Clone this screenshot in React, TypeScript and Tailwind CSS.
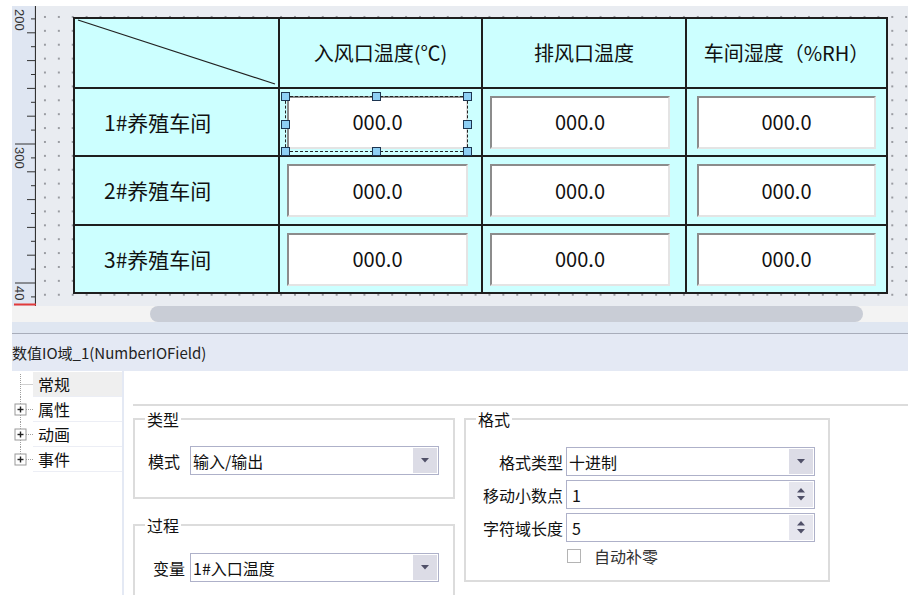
import React from 'react';

const rows = ['1#养殖车间', '2#养殖车间', '3#养殖车间'];

// ruler ticks, one every 13.9px, major every 10th
function Ruler() {
    const ticks = Array.from({ length: 22 }, (_, k) => k);
    return (
        <div className="w-[24px] h-full shrink-0 bg-[#dfe6f2] relative">
            <svg width="24" height="300" className="block">
                <line x1="23.5" y1="0" x2="23.5" y2="300" stroke="#333" strokeWidth="1.2" />
                {ticks.map(k => {
                    const y = -1 + 13.9 * k;
                    const len = k % 10 === 0 ? 21 : k % 2 === 0 ? 9 : 5;
                    return <line key={k} x1={24 - len} y1={y} x2="24" y2={y} stroke="#333" strokeWidth="1" />;
                })}
                <text transform="translate(3,3) rotate(90)" fontSize="13" fill="#333" fontFamily="'Liberation Sans', sans-serif">200</text>
                <text transform="translate(3,141) rotate(90)" fontSize="13" fill="#333" fontFamily="'Liberation Sans', sans-serif">300</text>
                <text transform="translate(3,280) rotate(90)" fontSize="13" fill="#333" fontFamily="'Liberation Sans', sans-serif">40</text>
                <line x1="2" y1="298.5" x2="24" y2="298.5" stroke="#e23a3a" strokeWidth="2" />
            </svg>
        </div>
    );
}

function ValueBox({ className }: { className: string }) {
    return (
        <div className={`h-[53px] bg-white border-2 border-t-[#8c8c8c] border-l-[#8c8c8c] border-b-[#e4e4e4] border-r-[#e4e4e4] flex items-center justify-center text-[20px] text-[#111] ${className}`}>
            000.0
        </div>
    );
}

function Handle({ className }: { className: string }) {
    return <div className={`absolute w-[9px] h-[9px] bg-[#8ecff4] border border-[#1d3550] ${className}`} />;
}

function DropArrow() {
    return (
        <svg width="8" height="5" viewBox="0 0 8 5">
            <path d="M0 0 L8 0 L4 4.5 Z" fill="#505068" />
        </svg>
    );
}

function Select({ value }: { value: string }) {
    return (
        <div className="w-[249px] h-[29px] shrink-0 border border-[#aeb1c9] bg-white flex">
            <div className="flex-1 pl-[2px] flex items-center text-[16px] text-[#111]">{value}</div>
            <div className="w-[24px] m-[1px] bg-[#dcdce6] flex items-center justify-center">
                <DropArrow />
            </div>
        </div>
    );
}

function Spinner({ value }: { value: string }) {
    return (
        <div className="w-[249px] h-[29px] shrink-0 border border-[#aeb1c9] bg-white flex">
            <div className="flex-1 pl-[5px] flex items-center text-[16px] text-[#111]">{value}</div>
            <div className="w-[24px] m-[1px] bg-[#e6e6ee] flex flex-col items-center justify-center gap-[3px]">
                <svg width="8" height="5" viewBox="0 0 8 5"><path d="M0 4.5 L8 4.5 L4 0 Z" fill="#505068" /></svg>
                <svg width="8" height="5" viewBox="0 0 8 5"><path d="M0 0 L8 0 L4 4.5 Z" fill="#505068" /></svg>
            </div>
        </div>
    );
}

function TreeItem({ label, plus, first, last }: { label: string; plus?: boolean; first?: boolean; last?: boolean }) {
    return (
        <div className="h-[25px] shrink-0 flex">
            <svg width="21" height="25" className="block">
                <line x1="8.5" y1={first ? 2 : 0} x2="8.5" y2={last ? 12.5 : 25} stroke="#a0a0a0" strokeDasharray="1 1" />
                <line x1={plus ? 14 : 8.5} y1="12.5" x2="21" y2="12.5" stroke="#a0a0a0" strokeDasharray="1 1" />
                {plus && (
                    <>
                        <rect x="3" y="7" width="11" height="11" fill="#fff" stroke="#9a9a9a" />
                        <line x1="5.5" y1="12.5" x2="11.5" y2="12.5" stroke="#222" strokeWidth="1.4" />
                        <line x1="8.5" y1="9.5" x2="8.5" y2="15.5" stroke="#222" strokeWidth="1.4" />
                    </>
                )}
            </svg>
            <div className={`flex-1 pl-[5px] flex items-center text-[16px] text-[#111] border-b border-[#eceef5] ${first ? 'bg-[#efefef]' : ''}`}>
                {label}
            </div>
        </div>
    );
}

export default function App() {
    return (
        <div className="w-[908px] h-[595px] overflow-hidden bg-white flex font-['Noto_Sans_CJK_SC','Noto_Sans',sans-serif] leading-none">
            <div className="w-[12px] shrink-0 bg-white" />
            <div className="flex-1 min-h-0 flex flex-col">
                <div className="h-[6px] shrink-0 bg-white" />

                {/* Canvas with ruler */}
                <div className="h-[300px] shrink-0 flex">
                    <Ruler />
                    <div className="flex-1 bg-[#e9ecf1] bg-[radial-gradient(circle,#9a9ca2_0.9px,transparent_1.2px)] bg-[size:13.9px_13.9px] bg-[position:2px_4px] pt-[11px] pl-[37px]">
                        <div className="w-[815px] h-[277px] bg-[#1e1e1e] p-[2px] grid grid-cols-[203px_201px_202px_199px] grid-rows-[68px_66px_67px_66px] gap-[2px]">
                            <div className="bg-[#ccffff] relative">
                                <svg className="absolute inset-0" width="203" height="68">
                                    <line x1="3" y1="1" x2="200" y2="65" stroke="#222" strokeWidth="1.3" />
                                </svg>
                            </div>
                            <div className="bg-[#ccffff] flex items-center justify-center text-[20px] text-[#111]">入风口温度(℃)</div>
                            <div className="bg-[#ccffff] flex items-center justify-center text-[20px] text-[#111]">排风口温度</div>
                            <div className="bg-[#ccffff] flex items-center justify-center text-[20px] text-[#111]">车间湿度（%RH）</div>

                            {rows.map((r, i) => (
                                <React.Fragment key={r}>
                                    <div className="bg-[#ccffff] flex items-center pl-[29px] text-[21px] text-[#111]">{r}</div>
                                    <div className="bg-[#ccffff] flex items-center relative">
                                        <ValueBox className="ml-[7px] w-[181px]" />
                                        {i === 0 && (
                                            <>
                                                <div className="absolute left-[5px] top-[7px] w-[183px] h-[56px] border border-dashed border-[#222]" />
                                                <Handle className="left-[1px] top-[3px]" />
                                                <Handle className="left-[92px] top-[3px]" />
                                                <Handle className="left-[183px] top-[3px]" />
                                                <Handle className="left-[1px] top-[31px]" />
                                                <Handle className="left-[183px] top-[31px]" />
                                                <Handle className="left-[1px] top-[58px]" />
                                                <Handle className="left-[92px] top-[58px]" />
                                                <Handle className="left-[183px] top-[58px]" />
                                            </>
                                        )}
                                    </div>
                                    <div className="bg-[#ccffff] flex items-center">
                                        <ValueBox className="ml-[7px] w-[180px]" />
                                    </div>
                                    <div className="bg-[#ccffff] flex items-center">
                                        <ValueBox className="ml-[10px] w-[179px]" />
                                    </div>
                                </React.Fragment>
                            ))}
                        </div>
                    </div>
                </div>

                {/* Horizontal scrollbar */}
                <div className="h-[16px] shrink-0 bg-[#f3f3f3] flex">
                    <div className="ml-[138px] w-[713px] h-full rounded-full bg-[#c9cdd6]" />
                </div>
                <div className="h-[11px] shrink-0 bg-[#dfe6f1]" />
                <div className="h-[1px] shrink-0 bg-[#a8adba]" />

                {/* Properties header */}
                <div className="h-[37px] shrink-0 bg-[#e4e9f4] flex items-center text-[15px] text-[#222]">
                    数值IO域_1(NumberIOField)
                </div>

                {/* Properties body */}
                <div className="flex-1 min-h-0 flex overflow-hidden">
                    <div className="w-[110px] shrink-0 flex flex-col pt-[1px]">
                        <TreeItem label="常规" first />
                        <TreeItem label="属性" plus />
                        <TreeItem label="动画" plus />
                        <TreeItem label="事件" plus last />
                    </div>
                    <div className="w-[2px] shrink-0 bg-[#e4e9f4]" />
                    <div className="flex-1 flex flex-col pl-[9px] pt-[33px]">
                        <div className="h-[2px] shrink-0 bg-[#dcdcdc]" />
                        <div className="flex gap-[9px] mt-[3px] shrink-0">
                            <div className="w-[322px] flex flex-col gap-[16px]">
                                <fieldset className="border-2 border-[#dcdcdc] pb-[22px]">
                                    <legend className="ml-[10px] px-[2px] text-[16px] leading-[20px] text-[#111]">类型</legend>
                                    <div className="mt-[17px] flex items-center pl-[13px] gap-[10px]">
                                        <span className="text-[16px] text-[#111]">模式</span>
                                        <Select value="输入/输出" />
                                    </div>
                                </fieldset>
                                <fieldset className="border-2 border-[#dcdcdc] pb-[30px]">
                                    <legend className="ml-[10px] px-[2px] text-[16px] leading-[20px] text-[#111]">过程</legend>
                                    <div className="mt-[18px] flex items-center pl-[18px] gap-[5px]">
                                        <span className="text-[16px] text-[#111]">变量</span>
                                        <Select value="1#入口温度" />
                                    </div>
                                </fieldset>
                            </div>
                            <fieldset className="w-[366px] h-[173px] border-2 border-[#dcdcdc]">
                                <legend className="ml-[10px] px-[2px] text-[16px] leading-[20px] text-[#111]">格式</legend>
                                <div className="mt-[18px] flex flex-col gap-[4px]">
                                    <div className="flex items-center gap-[3px]">
                                        <span className="w-[97px] text-right text-[16px] text-[#111]">格式类型</span>
                                        <Select value="十进制" />
                                    </div>
                                    <div className="flex items-center gap-[3px]">
                                        <span className="w-[97px] text-right text-[16px] text-[#111]">移动小数点</span>
                                        <Spinner value="1" />
                                    </div>
                                    <div className="flex items-center gap-[3px]">
                                        <span className="w-[97px] text-right text-[16px] text-[#111]">字符域长度</span>
                                        <Spinner value="5" />
                                    </div>
                                    <div className="flex items-center mt-[2px] pl-[101px] gap-[13px]">
                                        <div className="w-[14px] h-[14px] border border-[#b4b4b4] bg-white" />
                                        <span className="text-[16px] text-[#333]">自动补零</span>
                                    </div>
                                </div>
                            </fieldset>
                        </div>
                    </div>
                </div>
            </div>
        </div>
    );
}
